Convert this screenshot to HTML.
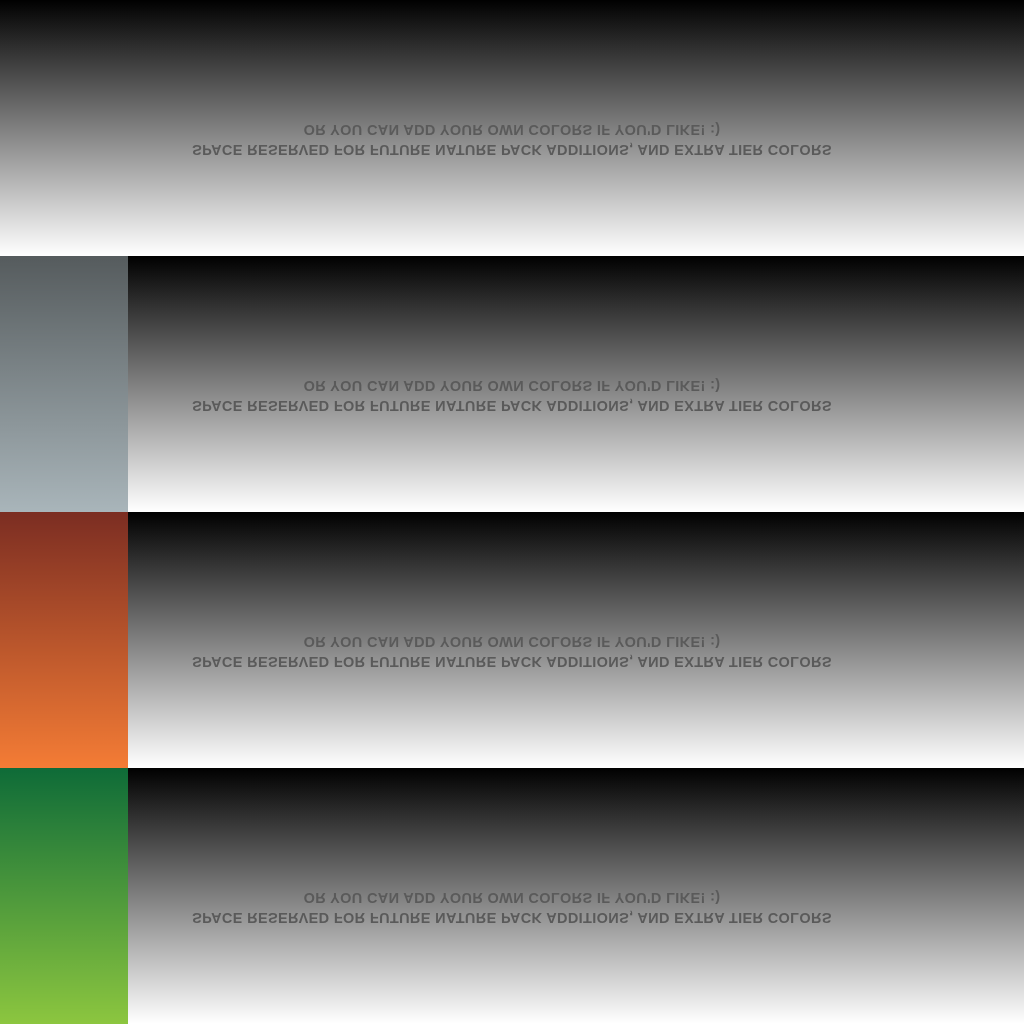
<!DOCTYPE html>
<html><head><style>
body{margin:0;width:1024px;height:1024px;overflow:hidden;background:#000}
.row{position:absolute;left:0;width:1024px;height:256px}
.g{position:absolute;top:0;height:256px;background:linear-gradient(#000,#fff)}
.sw{position:absolute;left:0;top:0;width:128px;height:256px}
.t{position:absolute;left:0;width:1024px;top:119px;text-align:center;font-family:"Liberation Sans",sans-serif;font-weight:bold;color:#5a5a5a;transform:scaleY(-1);line-height:20px;font-size:14.5px;letter-spacing:0.35px}
</style></head><body>
<div class="row" style="top:0"><div class="g" style="left:0;width:1024px"></div>
<div class="t">SPACE RESERVED FOR FUTURE NATURE PACK ADDITIONS, AND EXTRA TIER COLORS<br>OR YOU CAN ADD YOUR OWN COLORS IF YOU'D LIKE! :)</div></div>
<div class="row" style="top:256px"><div class="sw" style="background:linear-gradient(#555b5d,#a9b5ba)"></div><div class="g" style="left:128px;width:896px"></div>
<div class="t">SPACE RESERVED FOR FUTURE NATURE PACK ADDITIONS, AND EXTRA TIER COLORS<br>OR YOU CAN ADD YOUR OWN COLORS IF YOU'D LIKE! :)</div></div>
<div class="row" style="top:512px"><div class="sw" style="background:linear-gradient(#7b2d22,#f47c35)"></div><div class="g" style="left:128px;width:896px"></div>
<div class="t">SPACE RESERVED FOR FUTURE NATURE PACK ADDITIONS, AND EXTRA TIER COLORS<br>OR YOU CAN ADD YOUR OWN COLORS IF YOU'D LIKE! :)</div></div>
<div class="row" style="top:768px"><div class="sw" style="background:linear-gradient(#0e6b38,#8cc63f)"></div><div class="g" style="left:128px;width:896px"></div>
<div class="t">SPACE RESERVED FOR FUTURE NATURE PACK ADDITIONS, AND EXTRA TIER COLORS<br>OR YOU CAN ADD YOUR OWN COLORS IF YOU'D LIKE! :)</div></div>
</body></html>
